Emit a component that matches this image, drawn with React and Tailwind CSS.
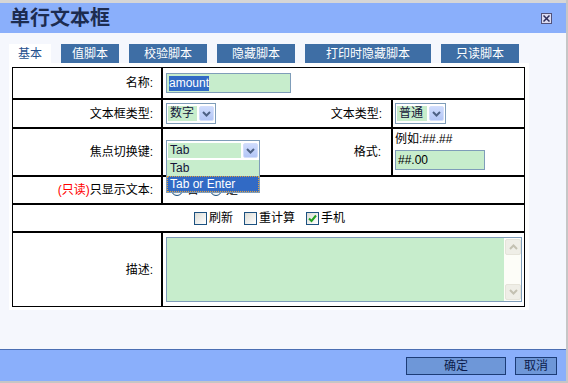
import React from "react";

const Chevron = ({ color = "#4d6185" }) => (
  <svg width="9" height="6" viewBox="0 0 9 6">
    <path d="M1 1 L4.5 4.5 L8 1" stroke={color} strokeWidth="2" fill="none" />
  </svg>
);

const DropBtn = () => (
  <div className="flex w-[15px] h-full items-center justify-center rounded-[2px] border border-[#d3defb] bg-gradient-to-b from-[#cfdcfd] to-[#b3c6f6]">
    <Chevron />
  </div>
);

const Select = ({ value, width, children }) => (
  <div className={`relative flex h-[21px] border border-[#7f9db9] bg-white px-[1px] py-[2px] gap-[2px] ${width}`}>
    <div className="flex flex-1 items-center bg-[#c7edcc] pl-[2px] leading-[15px] text-[#15153a]">{value}</div>
    <DropBtn />
    {children}
  </div>
);

const Radio = () => (
  <span className="inline-block w-[12px] h-[12px] rounded-full border border-[#1c5180] bg-gradient-to-br from-[#dcdcd6] to-white" />
);

const Check = ({ checked }) => (
  <span className="flex w-[13px] h-[13px] items-center justify-center border border-[#1c5180] bg-gradient-to-br from-[#dcdcd6] to-white">
    {checked && (
      <svg width="9" height="9" viewBox="0 0 9 9">
        <path d="M1 4.5 L3.5 7 L8 1.5" stroke="#21a121" strokeWidth="2" fill="none" />
      </svg>
    )}
  </span>
);

const Label = ({ children, w = "w-[148px]", pr = "pr-[8px]" }) => (
  <div className={`flex shrink-0 items-center justify-end ${w} ${pr}`}>{children}</div>
);

const App = () => {
  const tabs = [
    { name: "值脚本", w: "w-[58px]" },
    { name: "校验脚本", w: "w-[78px]" },
    { name: "隐藏脚本", w: "w-[78px]" },
    { name: "打印时隐藏脚本", w: "w-[126px]" },
    { name: "只读脚本", w: "w-[78px]" },
  ];

  return (
    <div className="flex w-[568px] h-[383px] flex-col overflow-hidden border-r-2 border-[#c6c6c6] bg-[#f5f7fd] text-[12px] text-black font-['Liberation_Sans','Noto_Sans_CJK_SC',sans-serif]">
      <div className="h-[3px] bg-[#d6d6d6]" />

      {/* title bar */}
      <div className="flex h-[30px] items-center justify-between bg-[#8aaffb] pl-[10px] pr-[14px]">
        <span className="text-[20px] font-bold leading-none text-[#1d2c50]">单行文本框</span>
        <span className="flex w-[11px] h-[11px] items-center justify-center border border-[#52527a] bg-[#dcdcf2]">
          <svg width="7" height="7" viewBox="0 0 7 7">
            <path d="M0.5 0.5 L6.5 6.5 M6.5 0.5 L0.5 6.5" stroke="#2e2e5a" strokeWidth="1.5" />
          </svg>
        </span>
      </div>

      {/* body */}
      <div className="flex flex-1 flex-col pl-[9px] pt-[11px]">
        <div className="flex h-[19px] gap-[10px]">
          <div className="flex w-[42px] items-center justify-center bg-white text-[#24508e]">基本</div>
          {tabs.map((t) => (
            <div key={t.name} className={`flex items-center justify-center bg-[#3e6ea5] text-white ${t.w}`}>
              {t.name}
            </div>
          ))}
        </div>

        <div className="w-[520px] h-[247px] bg-white pl-[3px] pt-[4px]">
          <div className="flex w-[513px] flex-col border border-black">
            {/* 名称 */}
            <div className="flex h-[30px]">
              <Label>名称:</Label>
              <div className="flex flex-1 items-center border-l-2 border-black pl-[3px]">
                <div className="flex w-[125px] h-[20px] items-center border border-[#7f9db9] bg-[#c7edcc] pl-[2px]">
                  <span className="bg-[#316ac5] leading-[15px] text-white">amount</span>
                </div>
              </div>
            </div>

            {/* 类型 */}
            <div className="flex h-[29px] border-t-2 border-black">
              <Label>文本框类型:</Label>
              <div className="flex w-[141px] items-center border-l-2 border-black pl-[3px]">
                <Select value="数字" width="w-[50px]" />
              </div>
              <Label w="w-[89px]" pr="pr-[9px]">
                <span className="pl-[2px]">文本类型:</span>
              </Label>
              <div className="flex flex-1 items-center border-l-2 border-black pl-[2px]">
                <Select value="普通" width="w-[51px]" />
              </div>
            </div>

            {/* 焦点 / 格式 */}
            <div className="flex h-[48px] border-t-2 border-black">
              <Label>焦点切换键:</Label>
              <div className="flex w-[141px] items-start border-l-2 border-black pl-[3px] pt-[11px]">
                <Select value="Tab" width="w-[94px]">
                  <div className="absolute left-[-1px] top-full z-10 flex w-[94px] flex-col border border-t-0 border-[#7f9db9] bg-[#c7edcc]">
                    <div className="h-[16px] pl-[3px] leading-[16px] text-[#15153a]">Tab</div>
                    <div className="h-[16px] border border-dotted border-[#e0a040] bg-[#316ac5] pl-[2px] leading-[14px] text-white">
                      Tab or Enter
                    </div>
                  </div>
                </Select>
              </div>
              <Label w="w-[89px]" pr="pr-[10px]">格式:</Label>
              <div className="flex flex-1 flex-col gap-[4px] border-l-2 border-black pl-[2px] pt-[3px]">
                <div className="leading-[14px]">例如:##.##</div>
                <div className="flex w-[90px] h-[20px] items-center border border-[#7f9db9] bg-[#c7edcc] pl-[2px]">##.00</div>
              </div>
            </div>

            {/* 只显示文本 */}
            <div className="flex h-[28px] border-t-2 border-black">
              <Label>
                <span className="text-[#ff0000]">(只读)</span>只显示文本:
              </Label>
              <div className="flex flex-1 items-center border-l-2 border-black pl-[8px]">
                <Radio />
                <span className="ml-[4px]">否</span>
                <span className="ml-[11px]" />
                <Radio />
                <span className="ml-[4px]">是</span>
              </div>
            </div>

            {/* checkboxes */}
            <div className="flex h-[28px] items-center justify-center gap-[11px] border-t-2 border-black pl-[2px]">
              <div className="flex items-center gap-[2px]">
                <Check />
                <span>刷新</span>
              </div>
              <div className="flex items-center gap-[2px]">
                <Check />
                <span>重计算</span>
              </div>
              <div className="flex items-center gap-[2px]">
                <Check checked />
                <span>手机</span>
              </div>
            </div>

            {/* 描述 */}
            <div className="flex h-[75px] border-t-2 border-black">
              <Label>描述:</Label>
              <div className="flex-1 border-l-2 border-black pl-[3px] pt-[4px]">
                <div className="flex w-[356px] h-[65px] border border-[#7f9db9] bg-[#c7edcc]">
                  <div className="flex-1" />
                  <div className="flex w-[17px] flex-col justify-between bg-[#fdfdf8] py-[1px] pl-[1px]">
                    <div className="flex h-[16px] items-center justify-center rounded-[2px] border border-[#e6e4da] bg-[#efeee7]">
                      <svg width="9" height="6" viewBox="0 0 9 6">
                        <path d="M1 5 L4.5 1.5 L8 5" stroke="#c4c1b2" strokeWidth="2" fill="none" />
                      </svg>
                    </div>
                    <div className="flex h-[16px] items-center justify-center rounded-[2px] border border-[#e6e4da] bg-[#efeee7]">
                      <Chevron color="#c4c1b2" />
                    </div>
                  </div>
                </div>
              </div>
            </div>
          </div>
        </div>
      </div>

      {/* footer */}
      <div className="flex h-[32px] items-center justify-end gap-[9px] border-t border-[#4a6eb3] bg-[#8aaffb] pr-[9px]">
        <button className="flex w-[100px] h-[18px] items-center justify-center border border-[#1c3c77] bg-[#6e97d8] text-[#0c1c4c]">
          确定
        </button>
        <button className="flex w-[42px] h-[18px] items-center justify-center border border-[#1c3c77] bg-[#6e97d8] text-[#0c1c4c]">
          取消
        </button>
      </div>
      <div className="h-[2px] bg-[#c6c6c6]" />
    </div>
  );
};

export default App;
